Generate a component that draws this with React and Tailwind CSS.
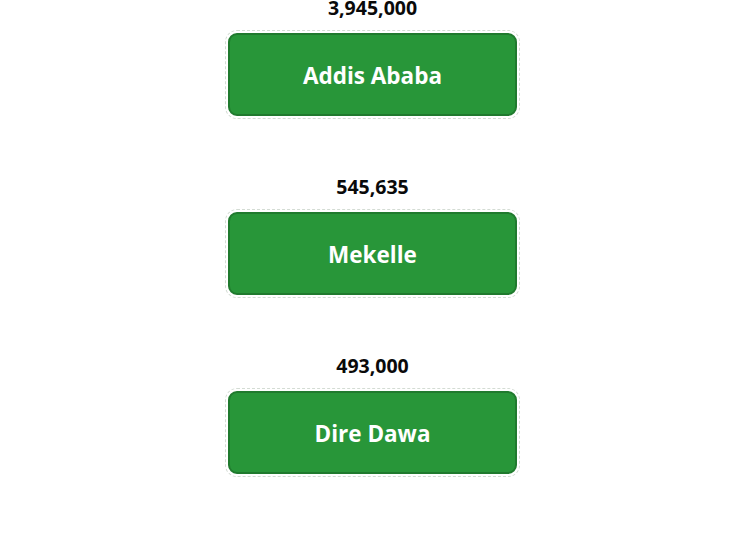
import React from "react";

const cities = [
  { pop: "3,945,000", name: "Addis Ababa" },
  { pop: "545,635", name: "Mekelle" },
  { pop: "493,000", name: "Dire Dawa" },
];

export default function App() {
  return (
    <div className="w-[750px] h-[536px] overflow-hidden bg-white" style={{ fontFamily: '"Open Sans", "Noto Sans", sans-serif' }}>
      <div className="flex flex-col items-center pr-[5px] -mt-[6px]">
        {cities.map((c) => (
          <div key={c.name} className="flex flex-col items-center mb-[57px]">
            <p className="text-[19.5px] leading-[28px] font-bold text-[#0a0a0a]">{c.pop}</p>
            <button className="mt-[11px] w-[289px] h-[83px] pt-[3px] rounded-[9px] bg-[#289639] border-2 border-[#207a2e] text-white text-[22.5px] font-bold outline-1 outline-dashed outline-[#d4dcd4] outline-offset-[2px]">
              {c.name}
            </button>
          </div>
        ))}
      </div>
    </div>
  );
}
